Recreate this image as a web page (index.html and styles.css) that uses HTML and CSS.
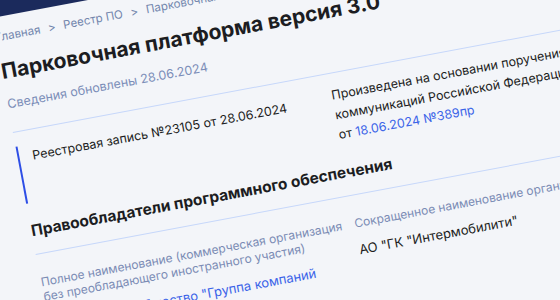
FILE: index.html
```html
<!DOCTYPE html>
<html lang="ru">
<head>
    <meta charset="UTF-8">
    <meta name="viewport" content="width=device-width, initial-scale=1.0">
    <title>Парковочная платформа версия 3.0</title>
    <link rel="stylesheet" href="styles.css">
</head>
<body>
    <div class="page">
        <header class="topbar"></header>
        <main class="content">
            <nav class="crumbs">
                <span>Главная</span>
                <span class="sep">&gt;</span>
                <span>Реестр ПО</span>
                <span class="sep">&gt;</span>
                <span>Парковочная платформа версия 3.0</span>
            </nav>
            <div class="head">
                <h1>Парковочная платформа версия 3.0</h1>
                <p class="updated">Сведения обновлены 28.06.2024</p>
            </div>
            <div class="record">
                <div class="record-num">Реестровая запись №23105 от 28.06.2024</div>
                <div class="record-basis">
                    Произведена на основании поручения Министерства цифрового развития, связи и массовых<br>
                    коммуникаций Российской Федерации<br>
                    от <a href="#">18.06.2024 №389пр</a>
                </div>
            </div>
            <h2>Правообладатели программного обеспечения</h2>
            <div class="owners">
                <div class="field">
                    <div class="label">Полное наименование (коммерческая организация<br>без преобладающего иностранного участия)</div>
                    <a class="value" href="#">Акционерное общество "Группа компаний "Интермобилити"</a>
                </div>
                <div class="field">
                    <div class="label">Сокращенное наименование организации</div>
                    <div class="value">АО "ГК "Интермобилити"</div>
                </div>
            </div>
        </main>
    </div>
</body>
</html>
```

FILE: styles.css
```css
body {
    margin: 0;
    overflow: hidden;
    background-color: #f3f5f9;
    font-family: Inter, "Noto Sans", sans-serif;
    color: #1c1d22;
}
.page {
    width: 1100px;
    margin: -30px 0 0 -37px;
    transform-origin: 40px 110px;
    transform: rotate(-10.6deg);
}
.topbar {
    height: 47px;
    background-color: #1b2a5c;
}
.content {
    padding-left: 40px;
}
.crumbs {
    display: flex;
    gap: 8px;
    margin-top: 12px;
    font-size: 11.5px;
    line-height: 16px;
    color: #7286ad;
}
.head {
    padding-bottom: 19px;
    border-bottom: 1px solid #c6d7fa;
}
h1 {
    margin: 13px 0 0;
    font-size: 21px;
    line-height: 28px;
    font-weight: 700;
}
.updated {
    margin: 10px 0 0;
    font-size: 12.5px;
    line-height: 18px;
    color: #7b8db8;
}
.record {
    display: grid;
    grid-template-columns: 305px 1fr;
    margin-top: 14px;
    border-left: 2px solid #2d4ee6;
    padding-left: 13px;
    font-size: 12.5px;
    line-height: 20px;
    white-space: nowrap;
}
.record-num {
    padding-top: 2px;
}
.record-basis {
    margin-top: -2px;
}
a {
    color: #3a63e8;
    text-decoration: none;
}
h2 {
    margin: 17px 0 0;
    padding-bottom: 12px;
    border-bottom: 1px solid #c6d7fa;
    font-size: 15.5px;
    line-height: 22px;
    font-weight: 700;
}
.owners {
    display: grid;
    grid-template-columns: 319px 1fr;
    margin-top: 20px;
}
.field {
    display: flex;
    flex-direction: column;
    align-items: flex-start;
    width: 300px;
}
.label {
    font-size: 12px;
    line-height: 15px;
    color: #7b8cb5;
    white-space: nowrap;
}
.value {
    margin-top: 9px;
    font-size: 13px;
    line-height: 20px;
}
```
